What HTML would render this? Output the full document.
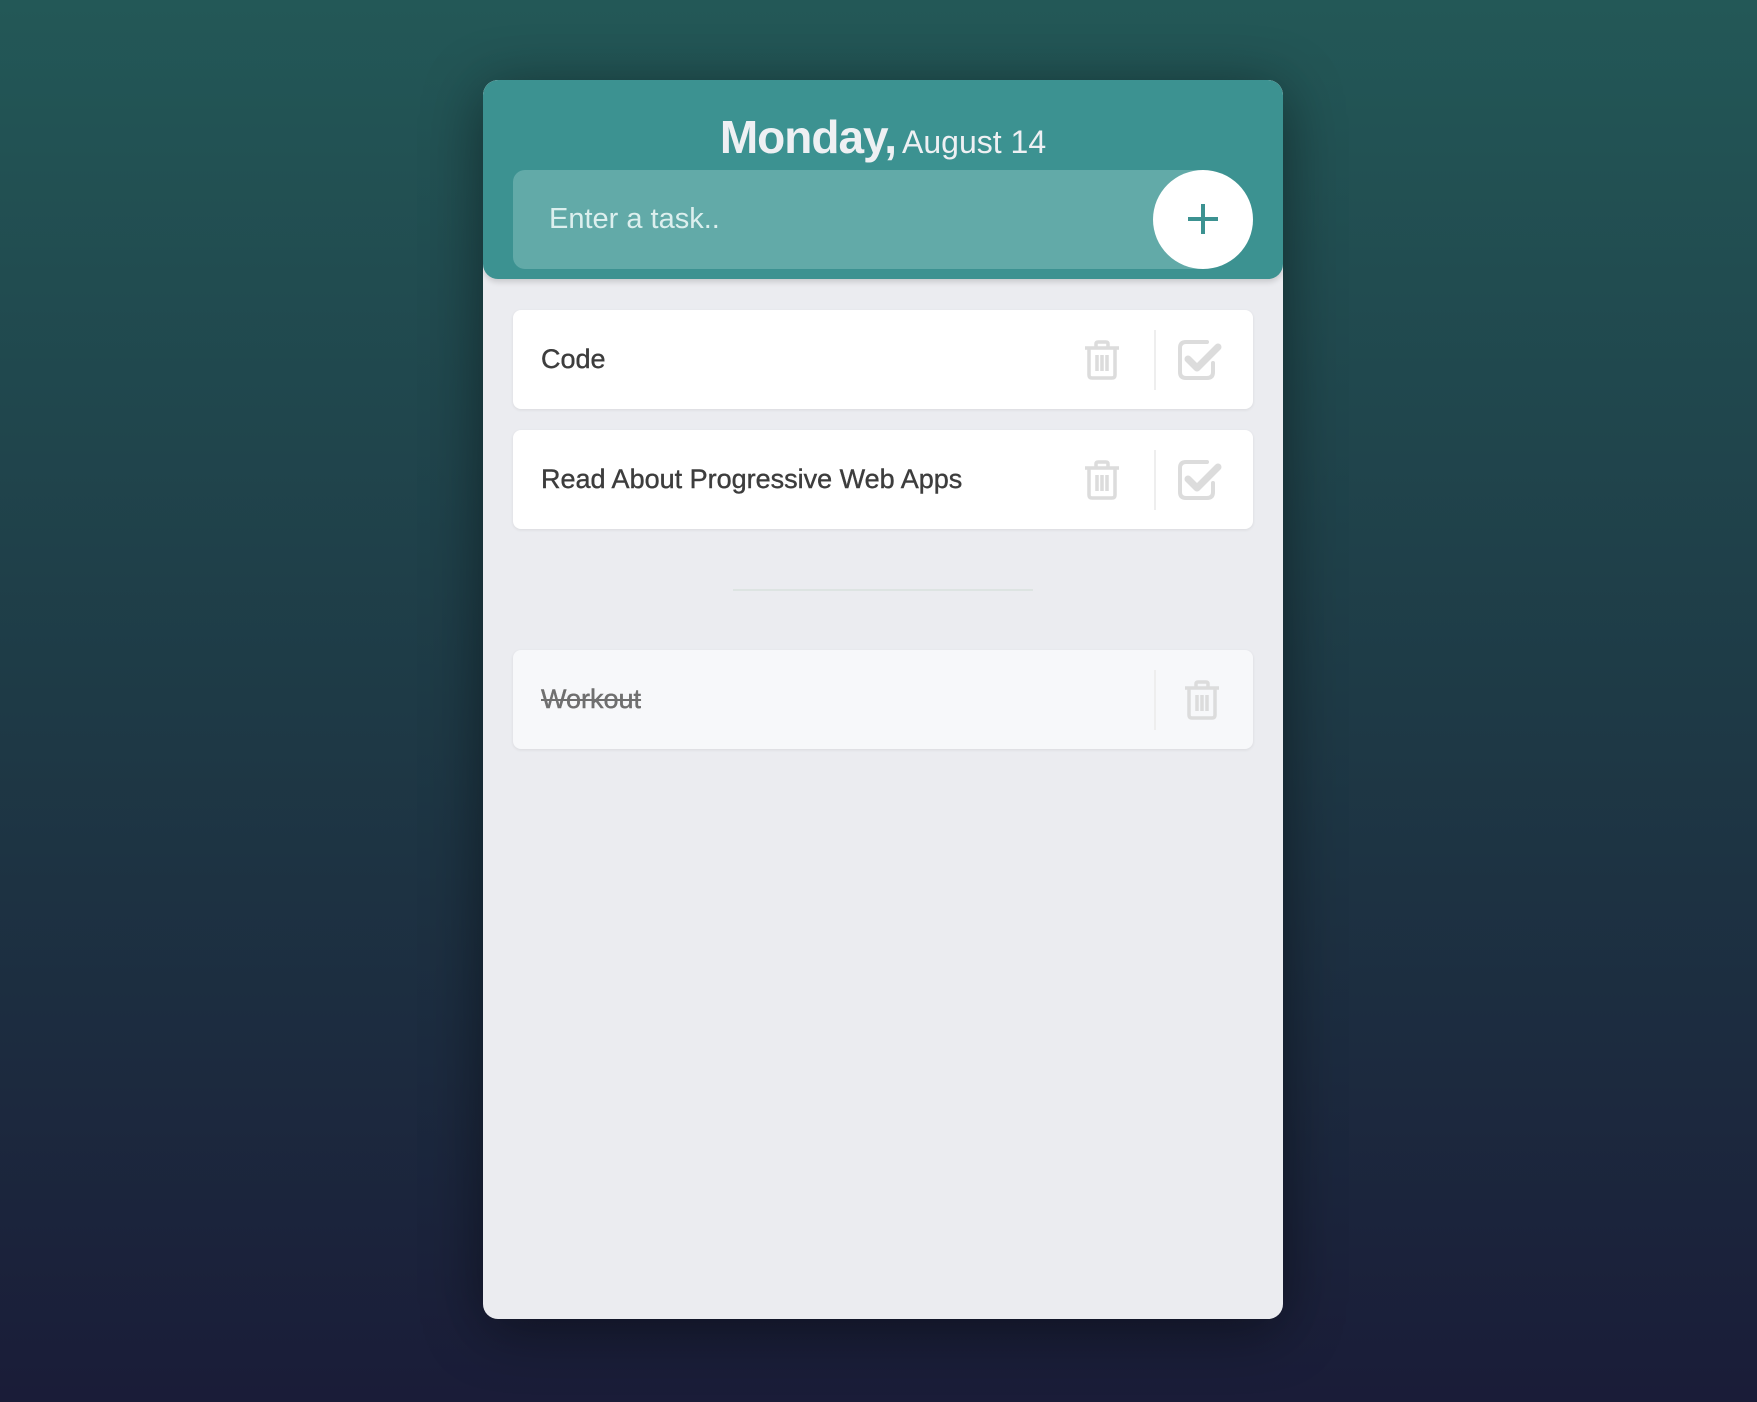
<!DOCTYPE html>
<html><head><meta charset="utf-8"><style>
*{box-sizing:border-box;margin:0;padding:0}
body{width:1757px;height:1402px;overflow:hidden;background:linear-gradient(180deg,#235857 0%,#1e3a46 50%,#1a1c38 100%);font-family:"Liberation Sans",sans-serif;position:relative}
.card{position:absolute;left:483px;top:80px;width:800px;height:1239px;background:#ebecf0;border-radius:15px;box-shadow:0 10px 60px rgba(0,0,0,.45);overflow:hidden}
.hdr{position:absolute;left:0;top:0;width:800px;height:199px;background:#3c9291;border-radius:15px;box-shadow:0 3px 6px rgba(0,0,0,.15)}
.title{position:absolute;left:0;width:800px;top:30px;text-align:center;color:#eef0f3;white-space:nowrap}
.title b{font-size:46px;font-weight:700;letter-spacing:-1px}
.title span{font-size:32px;margin-left:6px}
.inp{position:absolute;left:30px;top:90px;width:700px;height:99px;background:#62aaa8;border-radius:12px;color:#dcefee;font-size:29px;line-height:99px;padding-left:36px}
.plus{position:absolute;left:670px;top:90px;width:100px;height:99px;border-radius:50%;background:#fff}
.plus:before{content:"";position:absolute;left:35px;top:47px;width:30px;height:4px;background:#3c9291}
.plus:after{content:"";position:absolute;left:48px;top:34px;width:4px;height:30px;background:#3c9291}
.task{position:absolute;left:30px;width:740px;height:99px;background:#fff;border-radius:8px;box-shadow:0 1px 3px rgba(0,0,0,.08);font-size:27px;color:#3d3d3d;line-height:99px;padding-left:28px;-webkit-text-stroke:0.4px #3d3d3d}
.task.done{background:#f7f8fa;color:#6f6f6f;text-decoration:line-through;-webkit-text-stroke:0.4px #6f6f6f}
.sep{position:absolute;left:641px;top:20px;width:2px;height:60px;background:#eeeeee}
.ic{position:absolute;top:29px}
.div{position:absolute;left:250px;top:509px;width:300px;height:2px;background:#dde4e2}
</style></head><body>
<div class="card">
 <div class="hdr">
  <div class="title"><b>Monday,</b><span>August 14</span></div>
  <div class="inp">Enter a task..</div>
  <div class="plus"></div>
 </div>
 <div class="task" style="top:230px">Code
  <svg class="ic" style="left:570px" width="38" height="42" viewBox="0 0 38 42"><g fill="none" stroke="#dcdcdc" stroke-width="3.5"><path d="M2 9H36M13 9V5Q13 3 15 3H23Q25 3 25 5V9M6 9V36Q6 39 9 39H29Q32 39 32 36V9M14 16V32M19 16V32M24 16V32"/></g></svg>
  <div class="sep"></div>
  <svg class="ic" style="left:664px" width="48" height="42" viewBox="0 0 48 42"><g fill="none" stroke="#dcdcdc" stroke-width="4" stroke-linejoin="round" stroke-linecap="round"><path d="M36 24V33Q36 39 30 39H9Q3 39 3 33V9Q3 3 9 3H30"/><path d="M11 20L20 29L41 8" stroke-width="7"/></g></svg>
 </div>
 <div class="task" style="top:350px">Read About Progressive Web Apps
  <svg class="ic" style="left:570px" width="38" height="42" viewBox="0 0 38 42"><g fill="none" stroke="#dcdcdc" stroke-width="3.5"><path d="M2 9H36M13 9V5Q13 3 15 3H23Q25 3 25 5V9M6 9V36Q6 39 9 39H29Q32 39 32 36V9M14 16V32M19 16V32M24 16V32"/></g></svg>
  <div class="sep"></div>
  <svg class="ic" style="left:664px" width="48" height="42" viewBox="0 0 48 42"><g fill="none" stroke="#dcdcdc" stroke-width="4" stroke-linejoin="round" stroke-linecap="round"><path d="M36 24V33Q36 39 30 39H9Q3 39 3 33V9Q3 3 9 3H30"/><path d="M11 20L20 29L41 8" stroke-width="7"/></g></svg>
 </div>
 <div class="div"></div>
 <div class="task done" style="top:570px">Workout
  <div class="sep"></div>
  <svg class="ic" style="left:670px" width="38" height="42" viewBox="0 0 38 42"><g fill="none" stroke="#dcdcdc" stroke-width="3.5"><path d="M2 9H36M13 9V5Q13 3 15 3H23Q25 3 25 5V9M6 9V36Q6 39 9 39H29Q32 39 32 36V9M14 16V32M19 16V32M24 16V32"/></g></svg>
 </div>
</div>
</body></html>
